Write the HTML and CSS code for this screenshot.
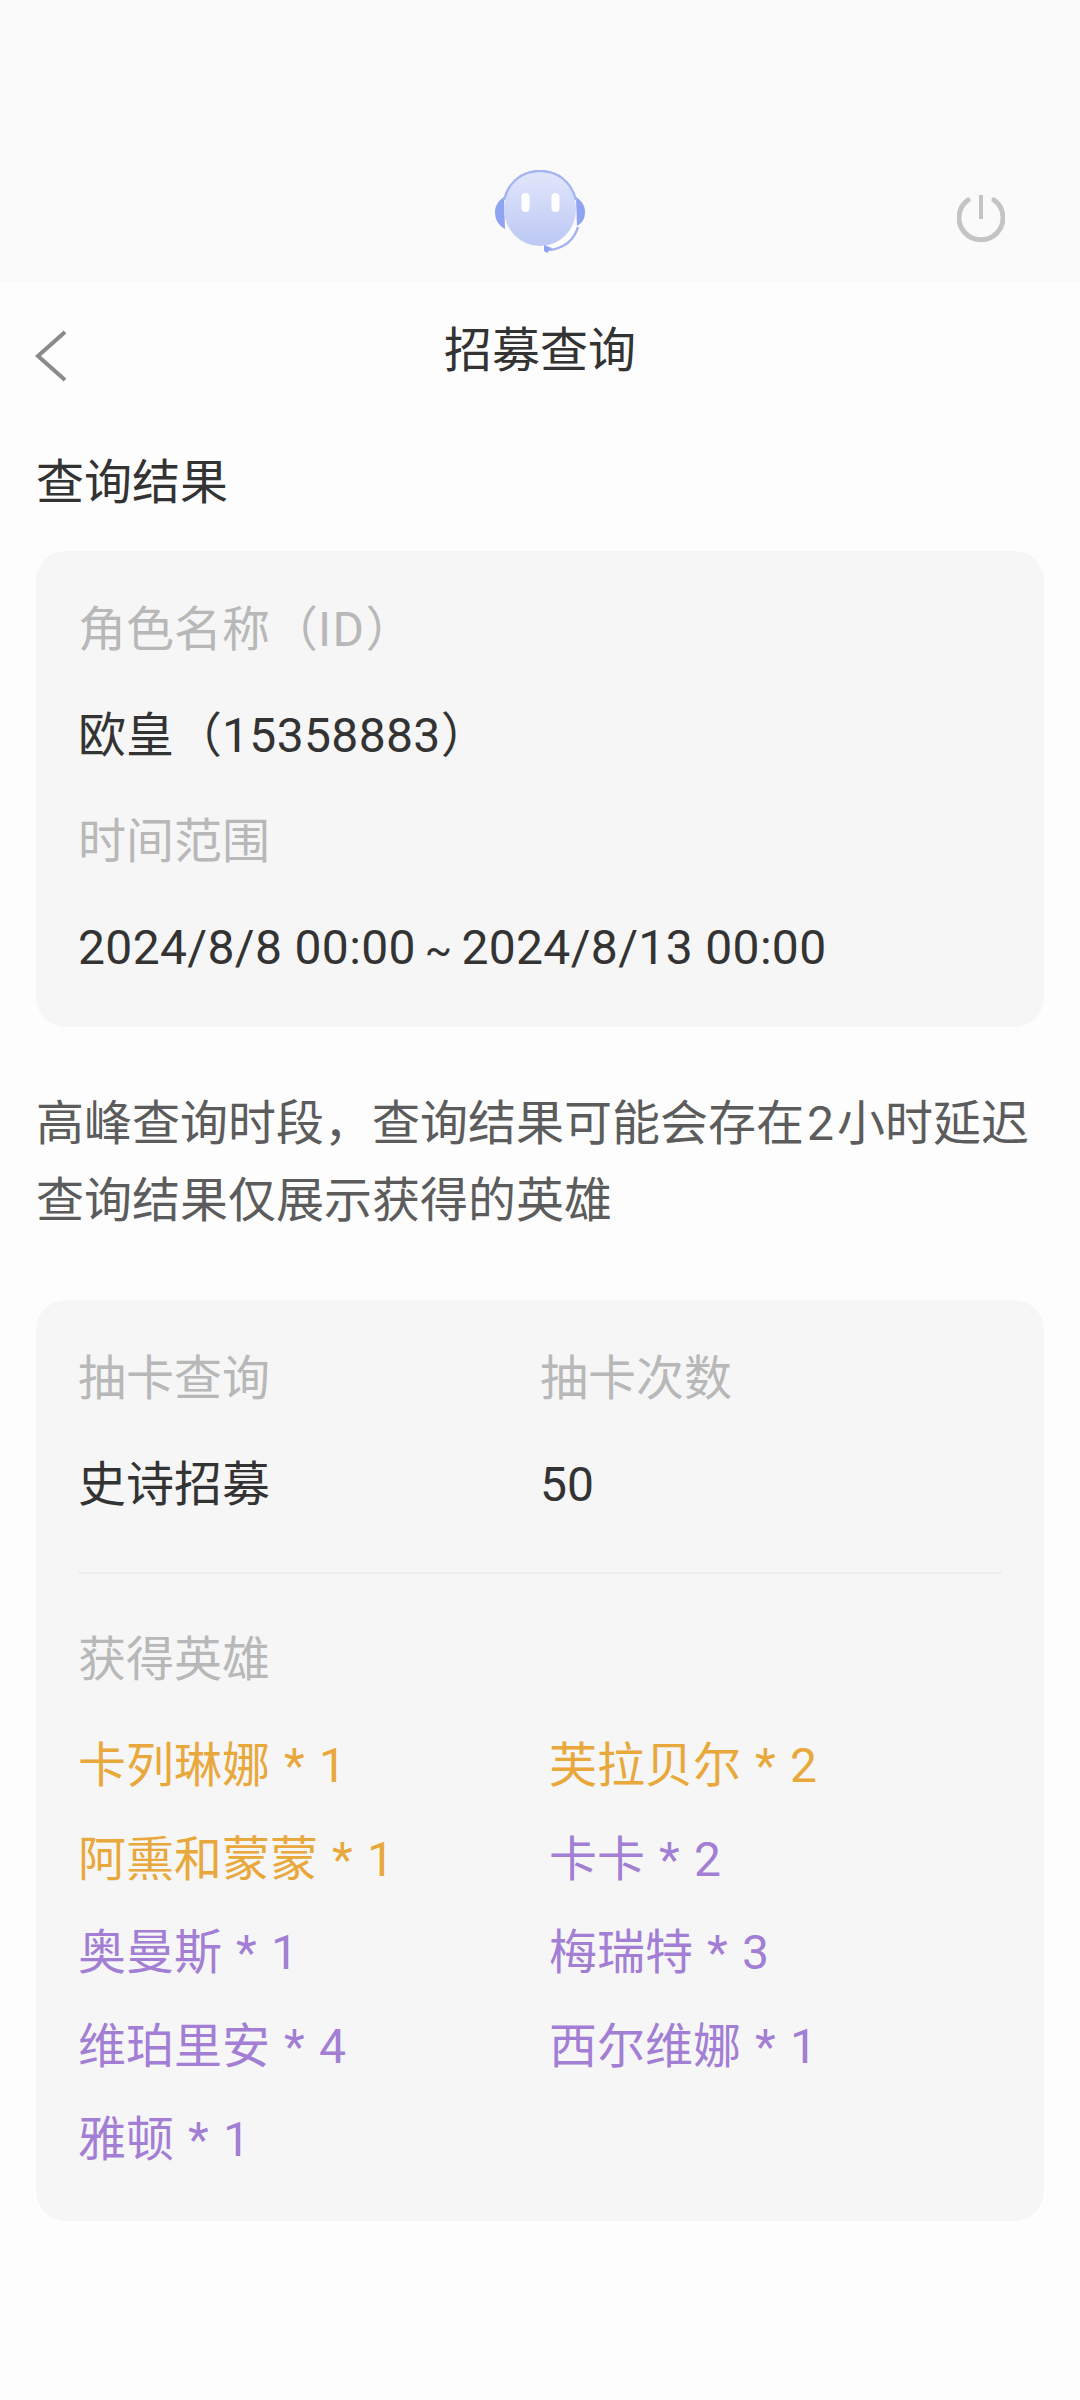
FILE: index.html
```html
<!DOCTYPE html>
<html lang="zh-CN">
<head>
<meta charset="utf-8">
<title>招募查询</title>
<link rel="stylesheet" href="styles.css">
</head>
<body>
<header class="topbar">
  <svg class="avatar" viewBox="0 0 92 84" width="92" height="84">
    <defs>
      <linearGradient id="face" x1="0" y1="0" x2="0" y2="1">
        <stop offset="0" stop-color="#e1e6fb"/>
        <stop offset="1" stop-color="#bcc8f4"/>
      </linearGradient>
    </defs>
    <path d="M10 27 C4 31 1 36 1 42 C1 49 4 55 11 59 Z" fill="#8fa3f0"/>
    <path d="M82 27 C88 31 91 36 91 42 C91 49 88 53 83 56 Z" fill="#8fa3f0"/>
    <ellipse cx="46" cy="39" rx="36" ry="37" fill="url(#face)"/>
    <path d="M10 30 C15 11 29 1 46 1 C63 1 77 11 82 30" fill="none" stroke="#a5b5f0" stroke-width="2.5"/>
    <path d="M81 56 C78 67 68 75 55 77" fill="none" stroke="#fff" stroke-width="4"/>
    <path d="M84 57 C80 70 70 78 56 80" fill="none" stroke="#a3b3f0" stroke-width="2.5"/>
    <path d="M50 75 L58 78 L53 83 L50 81 Z" fill="#8fa3f0"/>
    <rect x="27.5" y="23" width="8" height="19" rx="4" fill="#fff"/>
    <rect x="57.5" y="23" width="8" height="19" rx="4" fill="#fff"/>
  </svg>
  <svg class="power" viewBox="0 0 48 50" width="48" height="50">
    <path d="M11 6 A22 22 0 1 0 37 6" fill="none" stroke="#c4c4c4" stroke-width="5" stroke-linecap="round"/>
    <line x1="24" y1="1" x2="24" y2="25" stroke="#c4c4c4" stroke-width="4"/>
  </svg>
</header>
<nav class="navbar">
  <svg class="back" viewBox="0 0 32 52" width="32" height="52">
    <path d="M30 2 L3 26 L30 50" fill="none" stroke="#8a8a8a" stroke-width="4"/>
  </svg>
  <h1 class="nav-title">招募查询</h1>
</nav>
<main class="content">
  <h2 class="section-title">查询结果</h2>
  <section class="card card-info">
    <div class="label">角色名称（<span class="latin">ID</span>）</div>
    <div class="value">欧皇（<span class="num">15358883</span>）</div>
    <div class="label">时间范围</div>
    <div class="value"><span class="num">2024/8/8 00:00<span class="tilde">~</span>2024/8/13 00:00</span></div>
  </section>
  <p class="notice">高峰查询时段，查询结果可能会存在<span class="inline-digit">2</span>小时延迟<br>查询结果仅展示获得的英雄</p>
  <section class="card card-result">
    <div class="summary">
      <div class="label">抽卡查询</div>
      <div class="label">抽卡次数</div>
      <div class="value">史诗招募</div>
      <div class="value">50</div>
    </div>
    <div class="divider"></div>
    <div class="label">获得英雄</div>
    <div class="heroes">
      <span class="hero gold">卡列琳娜 * 1</span>
      <span class="hero gold">芙拉贝尔 * 2</span>
      <span class="hero gold">阿熏和蒙蒙 * 1</span>
      <span class="hero purple">卡卡 * 2</span>
      <span class="hero purple">奥曼斯 * 1</span>
      <span class="hero purple">梅瑞特 * 3</span>
      <span class="hero purple">维珀里安 * 4</span>
      <span class="hero purple">西尔维娜 * 1</span>
      <span class="hero purple">雅顿 * 1</span>
    </div>
  </section>
</main>
</body>
</html>
```
FILE: styles.css
```css
* { box-sizing: border-box; margin: 0; padding: 0; }
html, body { height: 100%; }
body {
  width: 1080px;
  height: 2400px;
  background: #fdfdfd;
  font-family: Roboto, "Noto Sans CJK SC", sans-serif;
  font-size: 48px;
  color: #333;
  overflow: hidden;
}
.topbar {
  height: 282px;
  background: #fafafa;
  display: flex;
  align-items: flex-start;
  justify-content: center;
  position: relative;
  padding-top: 170px;
}
.avatar { filter: blur(.6px); }
.power { position: absolute; left: 957px; top: 194px; filter: blur(.5px); }
.navbar {
  height: 138px;
  display: flex;
  align-items: center;
  justify-content: center;
  position: relative;
}
.back { position: absolute; left: 35px; top: 48px; filter: blur(.5px); }
.nav-title { font-size: 48px; font-weight: 400; line-height: 64px; }
.content { padding: 31px 36px 0; }
.section-title { font-size: 48px; font-weight: 400; line-height: 64px; }
.card { background: #f6f6f6; border-radius: 30px; padding: 44px 42px 0; }
.card-info { margin-top: 36px; height: 476px; }
.label { color: #b8b8b8; line-height: 70px; height: 70px; }
.value { color: #333; line-height: 70px; height: 70px; margin-top: 36px; margin-bottom: 36px; }
.card-info .value:last-child { margin-bottom: 0; }
.latin { letter-spacing: 1.5px; }
.num { letter-spacing: .35px; }
.tilde { font-size: 40px; margin: 0 9px; }
.notice { margin-top: 58px; line-height: 77px; color: #5c5c5c; font-weight: 400; }
.inline-digit { padding: 0 3px; }
.card-result { margin-top: 61px; height: 921px; }
.summary { display: grid; grid-template-columns: 462px 1fr; }
.summary .value { margin-bottom: 0; }
.divider { height: 2px; background: #eeeeee; margin-top: 52px; margin-bottom: 51px; }
.heroes { display: grid; grid-template-columns: 471px 1fr; grid-auto-rows: 93.5px; margin-top: 24px; }
.hero { line-height: 93.5px; word-spacing: 2.2px; }
.gold { color: #e8a83c; }
.purple { color: #a27ed4; }
```
